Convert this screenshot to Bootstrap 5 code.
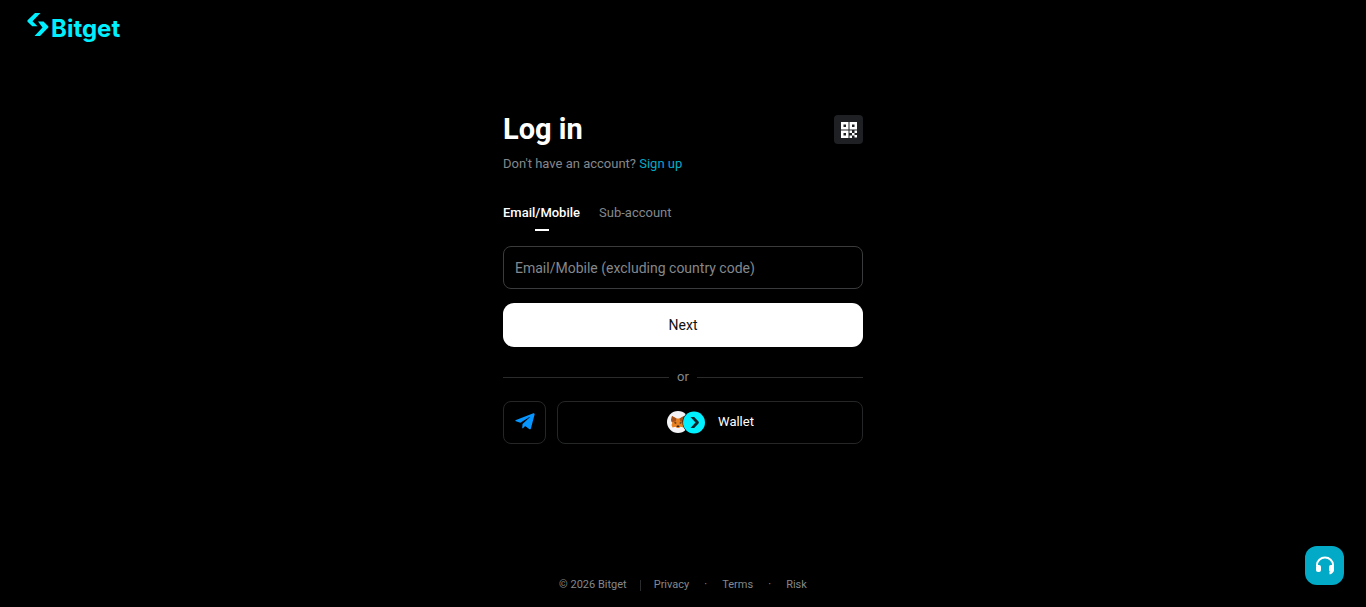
<!DOCTYPE html>
<html lang="en">
<head>
<meta charset="utf-8">
<meta name="viewport" content="width=device-width, initial-scale=1">
<title>Log in | Bitget</title>
<link href="https://cdn.jsdelivr.net/npm/bootstrap@5.3.0/dist/css/bootstrap.min.css" rel="stylesheet">
<style>
  body { background: #000; color: #fff; font: 13px/20px Roboto, "Liberation Sans", sans-serif; }
  a { text-decoration: none; }
  .site-head { padding: 12px 27px 0; height: 56px; }
  .brand-link { gap: 2px; color: #00f0ff; font: 700 24px/32px Inter, sans-serif; }
  .brand-link:hover { color: #00f0ff; }
  .login-box { max-width: 360px; padding-top: 56px; }
  .login-title { font-size: 29px; line-height: 35px; font-weight: 700; }
  .muted-text, .muted-text:hover { color: #84888c; }
  .signup-link { color: #03aac7; }
  .signup-row { margin: 9px 0 0; }
  .qr-btn { width: 29px; height: 29px; background: #1f2023; border-radius: 4px; }
  .login-tabs { gap: 19px; margin-top: 31px; }
  .login-tabs button { background: none; border: 0; padding: 0 0 9px; }
  .login-tabs .active { color: #fff; font-weight: 500; }
  .login-tabs .active::after { content: ""; display: block; width: 14px; height: 2px; margin: 6px auto -8px; background: #fff; }
  .login-input.form-control { height: 43px; margin-top: 14px; padding: 0 11px; background: #000; border: 1px solid #3a3b3d; border-radius: 8px; color: #fff; font-size: 14px; }
  .login-input::placeholder { color: #84888c; }
  .next-btn.btn { height: 44px; margin-top: 14px; background: #fff; color: #111; border-radius: 11px; font-size: 14px; }
  .or-row { gap: 8px; margin: 20px 0 14px; }
  .or-row i { flex: 1; height: 1px; background: #2a2b2d; }
  .alt-row { gap: 11px; }
  .alt-btn { height: 43px; background: #000; color: #fff; border: 1px solid #252628; border-radius: 8px; padding: 0 0 1px; }
  .telegram-btn { width: 43px; }
  .wallet-btn { gap: 12px; }
  .site-foot { font-size: 11px; line-height: 16px; padding-bottom: 14px; }
  .foot-rule { width: 1px; height: 11px; margin: 0 13px; background: #2a2b2d; }
  .foot-dot { width: 33px; text-align: center; }
  .help-btn { right: 22px; bottom: 22px; width: 39px; height: 39px; background: #03aac7; border-radius: 12px; }
</style>
</head>
<body class="d-flex flex-column min-vh-100">
<header class="site-head">
  <a href="#" class="brand-link d-inline-flex align-items-center">
    <svg width="22" height="25" viewBox="0 0 22 25" fill="currentColor" class="mb-2 flex-shrink-0" aria-hidden="true"><path d="M8 1h5.500L5.500 9.200l5 5H5.300L.800 9.900q-.9-.9 0-1.800zM11 9.500h5.500l4.500 4.500q.9 .9 0 1.800L13 24H7.500l8-8.500z"/></svg><span>Bitget</span>
  </a>
</header>
<main class="flex-grow-1 px-3 px-sm-0">
  <div class="login-box mx-auto">
    <div class="d-flex justify-content-between align-items-center">
      <h1 class="login-title mb-0">Log in</h1>
      <button type="button" class="qr-btn btn p-0 border-0 d-flex align-items-center justify-content-center" aria-label="Log in with QR code">
        <svg width="16" height="16" viewBox="0 0 16 16" fill="#fff" aria-hidden="true"><path fill-rule="evenodd" d="M0 0h7.500v7.500H0zM2.500 2.500v2.500H5V2.500zM8.500 0H16v7.500H8.500zM11 2.500v2.500h2.500V2.500zM0 8.500h7.500V16H0zM2.500 11v2.500H5V11zM8.500 8.500H11V11H8.500zM13.500 8.500H16V11h-2.500zM11 11h2.500v2.500H11zM8.500 13.500H11V16H8.500zM13.500 13H16v2.500h-2.500z"/></svg>
      </button>
    </div>
    <p class="signup-row muted-text lh-sm">Don't have an account? <a href="#" class="signup-link">Sign up</a></p>
    <div class="login-tabs d-flex align-items-start" role="tablist">
      <button type="button" class="active" role="tab" aria-selected="true">Email/Mobile</button>
      <button type="button" class="muted-text" role="tab" aria-selected="false">Sub-account</button>
    </div>
    <form>
      <input type="text" class="login-input form-control" aria-label="Email or mobile" placeholder="Email/Mobile (excluding country code)">
      <button type="button" class="next-btn btn w-100">Next</button>
    </form>
    <div class="or-row d-flex align-items-center muted-text"><i></i><span>or</span><i></i></div>
    <div class="alt-row d-flex">
      <button type="button" class="alt-btn telegram-btn d-flex align-items-center justify-content-center" aria-label="Telegram">
        <svg width="20" height="18" viewBox="0 0 20 18" fill="#0796ff" aria-hidden="true"><path d="M18.400.3 1 7.100q-1.300.7 0 1.200l4.400 1.400L14.500 4q.8-.3.300.2L7.500 10.900l-.3 4.400q.6 0 1-.4l2-2 4.300 3.300q1 .5 1.400-.7L19.600 1.500Q19.700 0 18.400.3z"/></svg>
      </button>
      <button type="button" class="alt-btn wallet-btn flex-grow-1 d-flex align-items-center justify-content-center">
        <svg width="40" height="24" viewBox="0 0 40 24" aria-hidden="true">
          <circle cx="12" cy="12" r="11" fill="#f4f4f6"/>
          <path fill="#e8811f" d="m6 6 4.500 2.500h3l4.500-2.500.8 4-1 3 .7 2-1 2.500-3-.8-1.500 1.300h-2l-1.500-1.300-3 .8-1-2.500.7-2-1-3z"/>
          <path fill="#a6501a" d="m6 6 4.500 2.500-.8 3-4 .5-.7-2zM18 6l-4.500 2.500.8 3 4 .5.5-2z"/>
          <path fill="#302b2a" d="m8.500 12 2 .7-.5 1-1.500-.5zM15.500 12l-2 .7.500 1 1.500-.5zM11 15.500h2l.5 1.500h-3z"/>
          <circle cx="28" cy="12.500" r="11.500" fill="#000"/><circle cx="28" cy="12.500" r="11" fill="#00f0ff"/>
          <path fill="#09232a" d="M24.500 7h3.700l4.300 4.500q.8 1 0 2L28.200 18h-3.700l5-5.500z"/>
        </svg>
        <span>Wallet</span>
      </button>
    </div>
  </div>
</main>
<footer class="site-foot d-flex justify-content-center align-items-center muted-text">
  <span>© 2026 Bitget</span><span class="foot-rule"></span>
  <a href="#" class="muted-text">Privacy</a><span class="foot-dot">·</span>
  <a href="#" class="muted-text">Terms</a><span class="foot-dot">·</span>
  <a href="#" class="muted-text">Risk</a>
</footer>
<button type="button" class="help-btn btn position-fixed p-0 border-0 d-flex align-items-center justify-content-center" aria-label="Support">
  <svg width="20" height="19" viewBox="0 0 20 19" fill="none" aria-hidden="true"><path d="M2 10V9a8 7.500 0 0 1 16 0v4q0 3.500-3.500 4.500" stroke="#fff" stroke-width="2"/><rect x="1" y="9" width="5" height="7" rx="2" fill="#fff"/><rect x="14" y="9" width="5" height="7" rx="2" fill="#fff"/></svg>
</button>
<script src="https://cdn.jsdelivr.net/npm/bootstrap@5.3.0/dist/js/bootstrap.bundle.min.js"></script>
</body>
</html>
